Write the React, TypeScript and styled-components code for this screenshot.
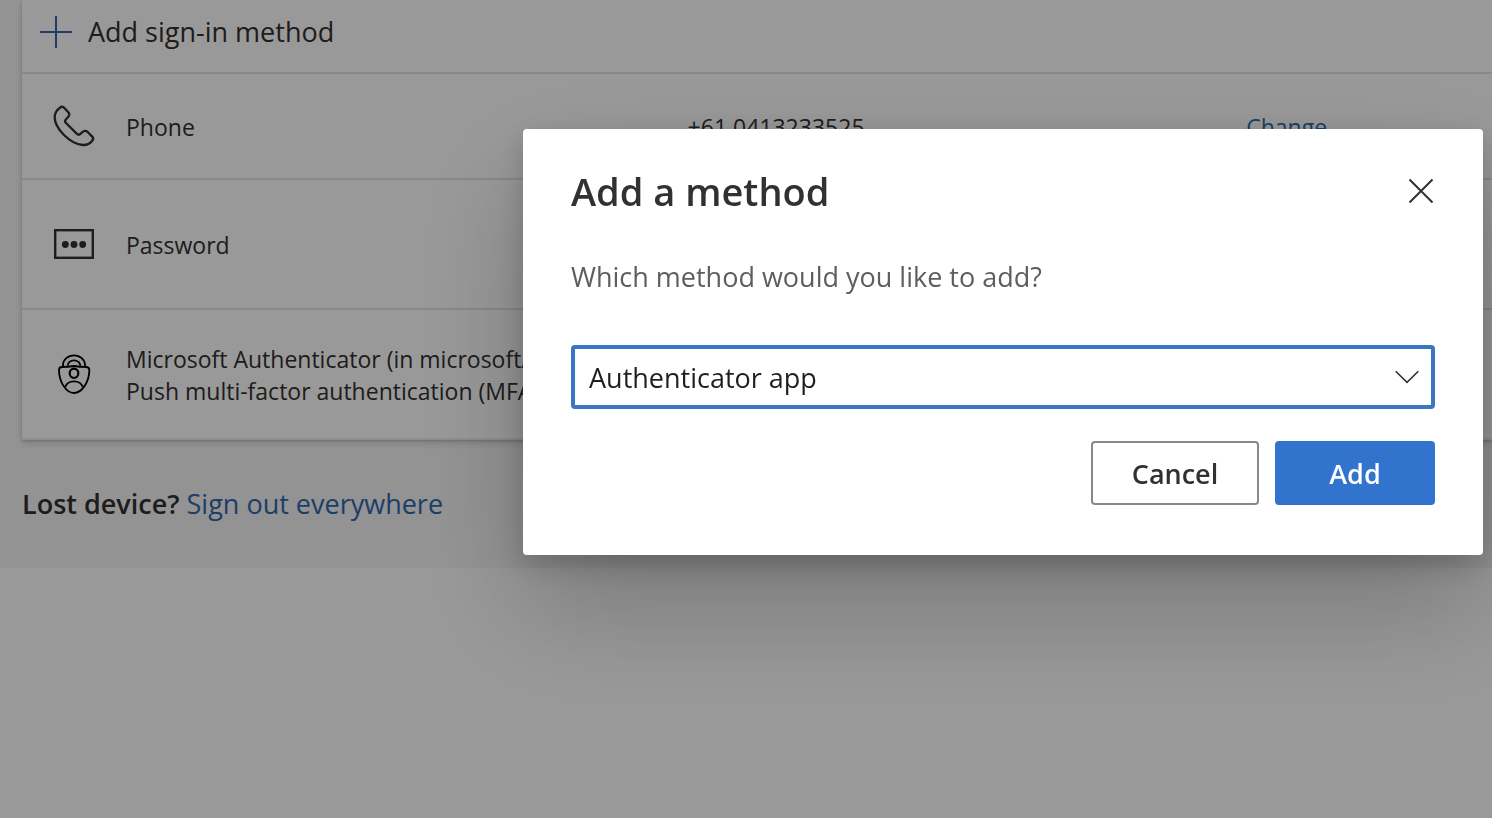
import React from "react";
import styled, { createGlobalStyle } from "styled-components";

const GlobalStyle = createGlobalStyle`
  *, *::before, *::after { box-sizing: border-box; }
  html, body { margin: 0; background: #ffffff; }
  body {
    color: #323130;
    font-family: "Open Sans", "Noto Sans", sans-serif;
    font-size: 23px;
    line-height: 32px;
    overflow-x: hidden;
  }
  button, select { font-family: inherit; }
`;

const Page = styled.main`
  padding: 0 0 48px 22px;
  background: #f6f6f6;
`;

const Card = styled.section`
  background: #ffffff;
  box-shadow: 0 3px 7px rgba(0, 0, 0, 0.16), 0 1px 2px rgba(0, 0, 0, 0.14);
`;

const AddMethodButton = styled.button`
  display: flex;
  align-items: center;
  gap: 16px;
  width: 100%;
  padding: 16px 18px 24px;
  border: 0;
  background: none;
  color: inherit;
  font-size: 27px;
  line-height: 32px;
  text-align: left;
`;

const MethodTable = styled.table`
  width: 100%;
  table-layout: fixed;
  border-collapse: separate;
  border-spacing: 0;
  border-bottom: 2px solid #eeeeee;
`;

const IconColumn = styled.col`
  width: 104px;
`;

const TextColumn = styled.col`
  width: 38%;
`;

const MethodRow = styled.tr<{ $compact?: boolean }>`
  height: ${({ $compact }) => ($compact ? 106 : 130)}px;
`;

const Cell = styled.td`
  padding: 2px 0 0;
  border-top: 2px solid #e4e4e4;
  vertical-align: middle;
  white-space: nowrap;
`;

const IconCell = styled(Cell)`
  padding: 0 0 0 32px;
`;

const DetailCell = styled(Cell)`
  padding-left: 3px;
`;

const Icon = styled.svg<{ $size: number }>`
  display: block;
  flex: none;
  width: ${({ $size }) => $size}px;
  height: ${({ $size }) => $size}px;
  overflow: visible;
  fill: none;
  stroke: currentColor;
`;

const PlusGlyph = styled(Icon)`
  color: #3068ac;
`;

const Link = styled.a`
  color: #3068ac;
  text-decoration: none;
`;

const LostDevice = styled.p`
  margin: 48px 0 0;
  font-size: 27px;
  line-height: 32px;
`;

const Strong = styled.strong`
  font-weight: 600;
`;

const Overlay = styled.div`
  position: fixed;
  inset: 0;
  display: flex;
  justify-content: flex-end;
  align-items: flex-start;
  padding: 129px 9px;
  background: rgba(0, 0, 0, 0.4);
`;

const Dialog = styled.div`
  width: 100%;
  max-width: 960px;
  padding: 38px 48px 50px;
  border-radius: 4px;
  background: #ffffff;
  box-shadow: 0 51px 115px rgba(0, 0, 0, 0.22), 0 10px 29px rgba(0, 0, 0, 0.18);
`;

const DialogHeader = styled.header`
  display: flex;
  align-items: center;
  justify-content: space-between;
`;

const Title = styled.h1`
  margin: 0;
  font-size: 38px;
  font-weight: 600;
  line-height: 48px;
`;

const CloseButton = styled.button`
  padding: 0;
  border: 0;
  background: none;
  color: #323130;
`;

const Question = styled.label`
  display: block;
  margin: 44px 0 50px;
  color: #605e5c;
  font-size: 27px;
  line-height: 36px;
`;

const SelectBox = styled.div`
  display: grid;
  align-items: center;
  margin-bottom: 32px;
  > * { grid-area: 1 / 1; }
`;

const Select = styled.select`
  width: 100%;
  height: 64px;
  padding: 0 56px 0 14px;
  border: 4px solid #3a76c4;
  border-radius: 4px;
  outline: 0;
  appearance: none;
  background: #ffffff;
  color: #201f1e;
  font-size: 27px;
`;

const Chevron = styled(Icon)`
  justify-self: end;
  margin-right: 16px;
  pointer-events: none;
`;

const Actions = styled.div`
  display: flex;
  justify-content: flex-end;
  gap: 16px;
`;

const ActionButton = styled.button<{ $primary?: boolean }>`
  min-width: ${({ $primary }) => ($primary ? 160 : 168)}px;
  height: 64px;
  border: 2px solid ${({ $primary }) => ($primary ? "#3274cd" : "#8a8886")};
  border-radius: 4px;
  background: ${({ $primary }) => ($primary ? "#3274cd" : "#ffffff")};
  color: ${({ $primary }) => ($primary ? "#ffffff" : "#323130")};
  font-size: 27px;
  font-weight: 600;
`;

const PlusIcon = () => (
  <PlusGlyph $size={32} viewBox="0 0 32 32" strokeWidth="2" aria-hidden="true">
    <path d="M16 0V32M0 16H32" />
  </PlusGlyph>
);

const PhoneIcon = () => (
  <Icon $size={40} viewBox="42 47 120 120" strokeWidth="7" aria-hidden="true">
    <path d="M60 52Q67 46 74 54L86 67Q90 73 85 79L77 88Q73 93 78 98L110 130Q116 136 122 130L129 124Q136 119 143 125L156 138Q163 145 156 152Q146 165 128 164Q100 162 72 134Q44 106 44 80Q45 62 60 52Z" />
  </Icon>
);

const PasswordIcon = () => (
  <Icon $size={40} viewBox="0 0 40 40" strokeWidth="2.4" aria-hidden="true">
    <rect x="1.2" y="6.2" width="37.6" height="27.6" />
    <g fill="currentColor" stroke="none">
      <circle cx="11.3" cy="20.5" r="3.4" />
      <circle cx="20" cy="20.5" r="3.4" />
      <circle cx="28.7" cy="20.5" r="3.4" />
    </g>
  </Icon>
);

const AuthenticatorIcon = () => (
  <Icon $size={40} viewBox="42 42 120 120" strokeWidth="5.5" color="#000000" aria-hidden="true">
    <path d="M69 80V75A33 29 0 0 1 135 75V80" />
    <path d="M83 77A19 16 0 0 1 121 77" />
    <path d="M57 90Q57 81 66 81Q84 81 102 78Q120 81 138 81Q148 81 148 90C148 125 126 159 102 159C78 159 57 125 57 90Z" />
    <ellipse cx="102" cy="100" rx="13" ry="14" strokeWidth="6.5" />
    <path d="M75 142Q81 124 102 124Q123 124 129 142" />
  </Icon>
);

export default function App() {
  return (
    <>
      <GlobalStyle />
      <Page>
        <Card aria-label="Sign-in methods">
          <AddMethodButton type="button">
            <PlusIcon />
            Add sign-in method
          </AddMethodButton>
          <MethodTable>
            <colgroup>
              <IconColumn />
              <TextColumn />
              <TextColumn />
              <col />
            </colgroup>
            <tbody>
              <MethodRow $compact>
                <IconCell><PhoneIcon /></IconCell>
                <Cell>Phone</Cell>
                <DetailCell>+61 0413233525</DetailCell>
                <DetailCell><Link href="#change">Change</Link></DetailCell>
              </MethodRow>
              <MethodRow>
                <IconCell><PasswordIcon /></IconCell>
                <Cell>Password</Cell>
                <DetailCell />
                <DetailCell />
              </MethodRow>
              <MethodRow>
                <IconCell><AuthenticatorIcon /></IconCell>
                <Cell>
                  Microsoft Authenticator (in microsoftA
                  <br />
                  Push multi-factor authentication (MFA
                </Cell>
                <DetailCell />
                <DetailCell />
              </MethodRow>
            </tbody>
          </MethodTable>
        </Card>
        <LostDevice>
          <Strong>Lost device?</Strong> <Link href="#sign-out">Sign out everywhere</Link>
        </LostDevice>
      </Page>
      <Overlay>
        <Dialog role="dialog" aria-modal="true" aria-labelledby="dialog-title">
          <DialogHeader>
            <Title id="dialog-title">Add a method</Title>
            <CloseButton type="button" aria-label="Close">
              <Icon $size={28} viewBox="0 0 28 28" strokeWidth="2" aria-hidden="true">
                <path d="M2.5 2.5L25.5 25.5M25.5 2.5L2.5 25.5" />
              </Icon>
            </CloseButton>
          </DialogHeader>
          <Question htmlFor="method">Which method would you like to add?</Question>
          <SelectBox>
            <Select id="method" defaultValue="app">
              <option value="app">Authenticator app</option>
            </Select>
            <Chevron $size={24} viewBox="0 0 24 24" strokeWidth="1.6" aria-hidden="true">
              <path d="M.7 6.3L12 17.3L23.3 6.3" />
            </Chevron>
          </SelectBox>
          <Actions>
            <ActionButton type="button">Cancel</ActionButton>
            <ActionButton type="button" $primary>Add</ActionButton>
          </Actions>
        </Dialog>
      </Overlay>
    </>
  );
}
